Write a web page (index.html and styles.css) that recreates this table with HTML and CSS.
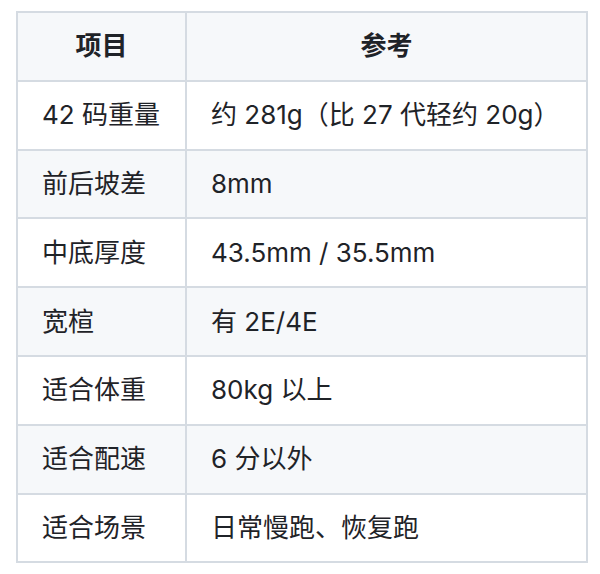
FILE: index.html
```html
<!DOCTYPE html>
<html lang="zh-CN">
<head>
<meta charset="utf-8">
<link rel="stylesheet" href="styles.css">
</head>
<body>
<table class="spec">
  <thead>
    <tr><th class="c1">项目</th><th class="c2">参考</th></tr>
  </thead>
  <tbody>
    <tr><td>42 码重量</td><td>约 281g（比 27 代轻约 20g）</td></tr>
    <tr><td>前后坡差</td><td>8mm</td></tr>
    <tr><td>中底厚度</td><td>43.5mm / 35.5mm</td></tr>
    <tr><td>宽楦</td><td>有 2E/4E</td></tr>
    <tr><td>适合体重</td><td>80kg 以上</td></tr>
    <tr><td>适合配速</td><td>6 分以外</td></tr>
    <tr><td>适合场景</td><td>日常慢跑、恢复跑</td></tr>
  </tbody>
</table>
</body>
</html>
```
FILE: styles.css
```css
html, body {
  margin: 0;
  padding: 0;
  background: #ffffff;
}
body {
  padding: 11px 0 0 16px;
  font-family: "Inter", "Noto Sans CJK SC", sans-serif;
  color: #1f2328;
}
.spec {
  border-collapse: collapse;
  width: 572px;
  table-layout: fixed;
  font-size: 26px;
}
.spec th, .spec td {
  border: 2px solid #d5dbe2;
  padding: 0 24px;
  height: 66.8px;
  line-height: 36px;
  text-align: left;
  vertical-align: middle;
  white-space: nowrap;
}
.spec th {
  text-align: center;
  font-weight: 700;
  background: #f6f8fa;
}
.spec .c1 { width: 119px; }
.spec tbody tr:nth-child(2n) td {
  background: #f6f8fa;
}
```
